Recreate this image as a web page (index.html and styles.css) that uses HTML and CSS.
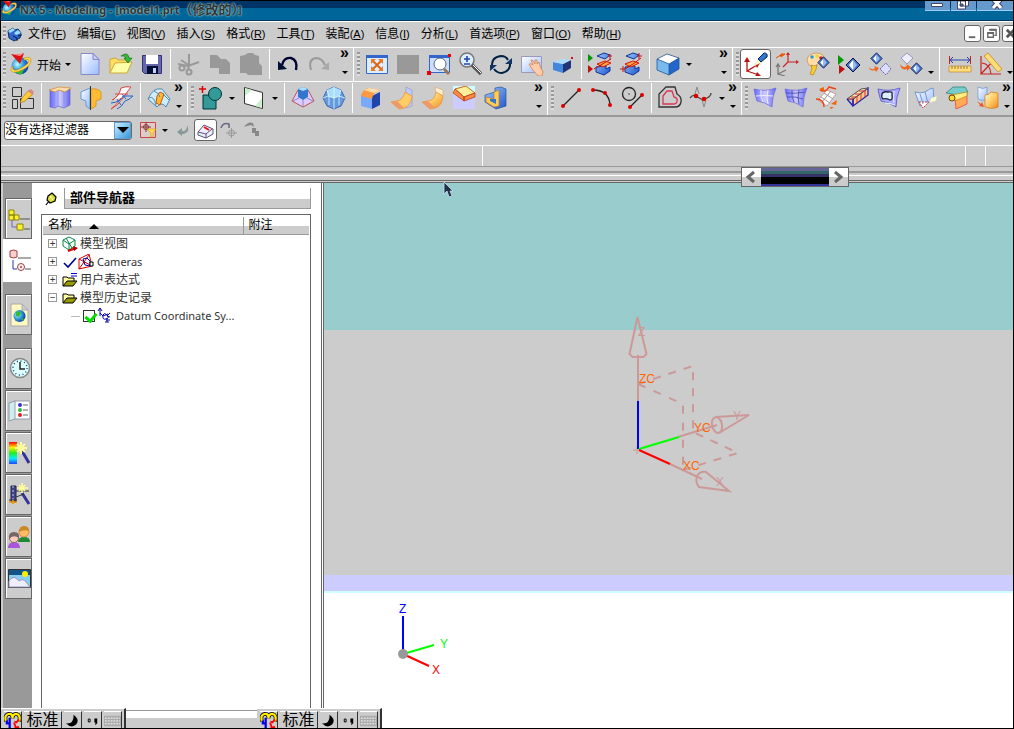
FILE: index.html
```html
<!DOCTYPE html>
<html lang="zh-CN">
<head>
    <meta charset="UTF-8">
    <meta name="viewport" content="width=device-width, initial-scale=1.0">
    <title>NX 5 - Modeling</title>
    <link rel="stylesheet" href="styles.css">
</head>
<body>

<!-- shared gradients -->
<svg class="defs" aria-hidden="true">
    <defs>
        <linearGradient id="blue" x1="0" y1="0" x2="1" y2="1"><stop offset="0" stop-color="#9cf"/><stop offset="1" stop-color="#25c"/></linearGradient>
        <linearGradient id="pale" x1="0" y1="0" x2="1" y2="1"><stop offset="0" stop-color="#fff"/><stop offset="1" stop-color="#9bf"/></linearGradient>
        <linearGradient id="violet" x1="0" y1="0" x2="1" y2="0"><stop offset="0" stop-color="#66f"/><stop offset=".5" stop-color="#ccf"/><stop offset="1" stop-color="#66e"/></linearGradient>
        <linearGradient id="gold" x1="0" y1="0" x2="1" y2="1"><stop offset="0" stop-color="#ffc"/><stop offset=".5" stop-color="#fc6"/><stop offset="1" stop-color="#e82"/></linearGradient>
        <linearGradient id="rainbow" x1="0" y1="0" x2="0" y2="1"><stop offset="0" stop-color="#f00"/><stop offset=".25" stop-color="#fe0"/><stop offset=".5" stop-color="#2e2"/><stop offset=".75" stop-color="#0ef"/><stop offset="1" stop-color="#24f"/></linearGradient>
        <radialGradient id="globe" cx=".35" cy=".4" r=".7"><stop offset="0" stop-color="#bff"/><stop offset=".5" stop-color="#39d"/><stop offset="1" stop-color="#039"/></radialGradient>
        <symbol id="nx" viewBox="0 0 24 24">
            <circle cx="11" cy="14" r="8.5" fill="url(#globe)"/>
            <path d="M5 18q5 3 10-1l-2 5q-5 1-8-4z" fill="#3b3"/>
            <path d="M2 2q7 2 13-1l-4 11z" fill="#d11"/>
            <path d="M2 2q7 2 13-1l-4 3z" fill="#f99"/>
            <path d="M15 6q7-2 7 2 0 6-9 10-8 4-11 1-1-2 2-5-1 3 1 4 3 1 9-3 7-4 6-7-1-1-5 0z" fill="#fd5" stroke="#c80" stroke-width=".6"/>
        </symbol>
        <symbol id="diamond" viewBox="0 0 16 16">
            <path d="M1 8l7-7 7 7-7 7z" fill="#47c" stroke="#114" stroke-width="1"/>
            <path d="M8 3v10L4 8z" fill="#fff"/><path d="M8 3l4 5-4 5z" fill="#9be"/>
        </symbol>
        <symbol id="folder" viewBox="0 0 16 14">
            <path d="M1 12V3h4l1 1h6v3" fill="#ff9" stroke="#000"/>
            <path d="M1 12l4-5h10l-4 5z" fill="#990" stroke="#000"/>
        </symbol>
        <symbol id="ime" viewBox="0 0 18 18">
            <path d="M2 10q-2-8 4-8 3 0 3 5 0-5 4-5 5 1 3 8" fill="none" stroke="#000" stroke-width="4"/>
            <path d="M2 10q-2-8 4-8 3 0 3 5 0-5 4-5 5 1 3 8" fill="none" stroke="#fe0" stroke-width="2.400"/>
            <path d="M6 6v11M3 9v3h4" fill="none" stroke="#00e" stroke-width="2.400"/>
            <path d="M16 8l-3 3-2-1M10 12q2 0 2 4h4" fill="none" stroke="#f00" stroke-width="1.800"/>
        </symbol>
    </defs>
</svg>

<div class="window">

    <header class="titlebar">
        <svg class="title-icon" viewBox="0 0 24 24"><use href="#nx"/></svg>
        <h1>NX 5 - Modeling - [model1.prt<span>（修改的）</span>]</h1>
        <div class="title-buttons">
            <button aria-label="Minimize"><svg viewBox="0 0 16 10"><path d="M2.500 2.500h11v3h-11z" fill="#fff" stroke="#446"/></svg></button>
            <button aria-label="Restore"><svg viewBox="0 0 16 10"><path d="M5.500-2h8v7h-8zM2.500 0h8v8h-8z" fill="#fff" stroke="#446"/><path d="M5 3h3v2H5z" fill="#369" stroke="#446"/></svg></button>
            <button aria-label="Close" class="title-close"><svg viewBox="0 0 16 10"><path d="M4-2l8 9M12-2L4 7" stroke="#446" stroke-width="5"/><path d="M4-2l8 9M12-2L4 7" stroke="#fff" stroke-width="3"/></svg></button>
        </div>
    </header>

    <nav class="menubar">
        <span class="grip"></span>
        <svg class="menu-icon" viewBox="0 0 16 16"><path d="M1 5l5-3 2 2 3-1 3 4-1 5-6 3-5-3z" fill="#36c" stroke="#136"/><path d="M1 5l5-3 2 2-5 3zM7 7l4-3 3 3-5 2z" fill="#9df"/><path d="M6 10l4 2v3M11 10l4-1" stroke="#024" fill="none"/></svg>
        <button>文件<span>(<u>F</u>)</span></button>
        <button>编辑<span>(<u>E</u>)</span></button>
        <button>视图<span>(<u>V</u>)</span></button>
        <button>插入<span>(<u>S</u>)</span></button>
        <button>格式<span>(<u>R</u>)</span></button>
        <button>工具<span>(<u>T</u>)</span></button>
        <button>装配<span>(<u>A</u>)</span></button>
        <button>信息<span>(<u>I</u>)</span></button>
        <button>分析<span>(<u>L</u>)</span></button>
        <button>首选项<span>(<u>P</u>)</span></button>
        <button>窗口<span>(<u>O</u>)</span></button>
        <button>帮助<span>(<u>H</u>)</span></button>
        <div class="doc-buttons">
            <button aria-label="Minimize part"><svg viewBox="0 0 14 14"><path d="M3 11h7" stroke="#666" stroke-width="2"/></svg></button>
            <button aria-label="Restore part"><svg viewBox="0 0 14 14"><path d="M5 3.500V3h7v6h-2M3 6h6v5H3z" fill="none" stroke="#666" stroke-width="1.500"/><path d="M5 3h7M3 6.500h6" stroke="#666" stroke-width="2"/></svg></button>
            <button aria-label="Close part"><svg viewBox="0 0 14 14"><path d="M3 3l8 8M11 3l-8 8" stroke="#555" stroke-width="3"/></svg></button>
        </div>
    </nav>

    <div class="toolbar">
        <div class="group">
            <span class="grip"></span>
            <button class="start"><svg viewBox="0 0 24 24"><use href="#nx"/></svg>开始<i class="caret"></i></button>
            <button class="tool" aria-label="New"><svg viewBox="0 0 24 24"><path d="M3 1.500h12l6 6v15H3z" fill="url(#pale)" stroke="#88c"/><path d="M15 1.500v6h6z" fill="#ccf" stroke="#88c"/></svg></button>
            <button class="tool" aria-label="Open"><svg viewBox="0 0 24 24"><path d="M1 21V7l6-1 2 2h9v4" fill="#fd6" stroke="#ca3"/><path d="M1 21l5-10 17-1-5 11z" fill="#ffa" stroke="#ca3"/><path d="M12 4q7-5 8 2h3l-4 5-4-5h2q-1-3-5-2z" fill="#3b3" stroke="#161" stroke-width=".6"/></svg></button>
            <button class="tool" aria-label="Save"><svg viewBox="0 0 24 24"><path d="M2.500 3.500h19v18h-17l-2-2z" fill="#66a" stroke="#337"/><path d="M6 3h12v9H6z" fill="#fff"/><path d="M7 14h11v8H7z" fill="#013"/><path d="M13 16h3v5h-3z" fill="#ccf"/></svg></button>
            <i class="sep"></i>
            <button class="tool" aria-label="Cut"><svg viewBox="0 0 24 24" fill="none" stroke="#999" stroke-width="2"><path d="M1 12l10 2 11-4M12 2v12l-1 3M4 8l9 6"/><circle cx="5" cy="16" r="2.500"/><circle cx="12" cy="20" r="2.500"/></svg></button>
            <button class="tool" aria-label="Copy"><svg viewBox="0 0 24 24" fill="#999"><path d="M2 3h7l4 4h5l4 4v11H11v-6H2z"/></svg></button>
            <button class="tool" aria-label="Paste"><svg viewBox="0 0 24 24" fill="#999"><path d="M1 4l5-1 3-2h5l2 2 4 1v7l3 3v9H9l-2-2H1z"/></svg></button>
            <i class="sep"></i>
            <button class="tool" aria-label="Undo"><svg viewBox="0 0 24 24"><path d="M6 13q2-8 9-7 7 2 5 12" fill="none" stroke="#003" stroke-width="2.400"/><path d="M2 9v9l9-1z" fill="#013"/></svg></button>
            <button class="tool" aria-label="Redo"><svg viewBox="0 0 24 24"><path d="M4 18Q1 7 9 6q6 0 9 7" fill="none" stroke="#999" stroke-width="2"/><path d="M22 10v8l-8-1z" fill="#aaa"/></svg></button>
            <button class="overflow overflow-mid" aria-label="More"><span>»</span><i class="caret"></i></button>
        </div>
        <div class="group">
            <span class="grip"></span>
            <button class="tool" aria-label="Fit"><svg viewBox="0 0 24 24"><path d="M1.500 3.500h21v18h-21z" fill="#def" stroke="#36c"/><path d="M1 3h22v3H1z" fill="#36c"/><path d="M8 9l8 8M16 9l-8 8" stroke="#d61" stroke-width="2"/><path d="M6 7h5l-5 5zM18 7v5l-5-5zM6 19v-5l5 5zM18 19h-5l5-5z" fill="#e72"/></svg></button>
            <button class="tool" aria-label="Fit selection"><svg viewBox="0 0 24 24"><path d="M1 3h22v19H1z" fill="#999"/><path d="M4 19h2M18 19h2" stroke="#a96"/></svg></button>
            <button class="tool" aria-label="Zoom window"><svg viewBox="0 0 24 24"><path d="M2.500 3.500h20v17h-20z" fill="#cdf" stroke="#36c"/><path d="M2 3h20v3H2z" fill="#36c"/><circle cx="13" cy="12" r="6" fill="#fff" stroke="#567"/><path d="M17 17l5 5" stroke="#975" stroke-width="3"/><path d="M0 19h4v4H0zM21 2h3v3h-3z" fill="#e00"/></svg></button>
            <button class="tool" aria-label="Zoom"><svg viewBox="0 0 24 24"><circle cx="9" cy="8" r="7" fill="#def" stroke="#777" stroke-width="1.500"/><path d="M9 4v6M6 7h6M6 12h6" stroke="#24a" stroke-width="1.600"/><path d="M14 13l9 9" stroke="#555" stroke-width="3.500"/><path d="M15 13l8 8" stroke="#fff"/></svg></button>
            <button class="tool" aria-label="Rotate"><svg viewBox="0 0 24 24" fill="none" stroke="#024" stroke-width="2"><path d="M3 15Q2 5 12 4q5 0 7 4M21 10q1 9-8 11-5 0-8-4"/><path d="M23 6v6h-7zM1 19v-6h7z" fill="#136" stroke="none"/></svg></button>
            <button class="tool" aria-label="Pan"><svg viewBox="0 0 24 24"><path d="M1.500 4.500h20v16h-20z" fill="url(#pale)" stroke="#99b"/><path d="M12 17l-3-5q2-1 4 1l-2-5q2-1 4 4l0-4 2 0v4l2-2 1 4 3 6-1 4h-4z" fill="#fca" stroke="#c74" stroke-width=".7"/></svg></button>
            <button class="tool" aria-label="Perspective"><svg viewBox="0 0 24 24"><path d="M2 10l10 2v9L2 18z" fill="#48d"/><path d="M12 12l8-4v8l-8 5z" fill="#237"/><path d="M2 10l9-3 9 1-8 4z" fill="#adf"/><path d="M20 5h2v2h-2z" fill="#c11"/></svg></button>
            <i class="sep"></i>
            <button class="tool" aria-label="Update"><svg viewBox="0 0 24 24"><path d="M9 4l7-3 6 2-5 4zM8 15v5l8 3 6-4v-4l-4 2v-3z" fill="url(#blue)" stroke="#139"/><path d="M9 12l8-3 6 2-8 4z" fill="#fa4" stroke="#d11"/><path d="M6 17L23 7M22 2v6M20 4h4" stroke="#c11" fill="none"/><path d="M0 2l5 4-5 4z" fill="#090"/><path d="M0 13l5 4-5 4z" fill="#b11"/></svg></button>
            <button class="tool" aria-label="Delay update"><svg viewBox="0 0 24 24"><path d="M7 4l7-3 6 2-5 4zM6 15v5l8 3 6-4v-4l-4 2v-3z" fill="url(#blue)" stroke="#139"/><path d="M6 12l8-3 6 2-8 4z" fill="#fa4" stroke="#d11"/><path d="M1 17h5l8-5 8-6M20 1v6M18 4h5M4 14v6" stroke="#c11" fill="none"/></svg></button>
            <i class="sep"></i>
            <button class="tool" aria-label="Shaded"><svg viewBox="0 0 24 24"><path d="M1 7l10-5 12 4-10 6z" fill="#fff"/><path d="M1 7l12 5v11L1 18z" fill="#7be"/><path d="M13 12l10-6v11l-10 6z" fill="#26c"/><path d="M1 7l10-5 12 4v11l-10 6-12-5zM1 7l12 5 10-6M13 12v11" fill="none" stroke="#259" stroke-width=".8"/></svg></button>
            <button class="drop" aria-label="Shading styles"><i class="caret"></i></button>
            <button class="overflow overflow-wide" aria-label="More"><span>»</span><i class="caret"></i></button>
        </div>
        <div class="group">
            <span class="grip"></span>
            <button class="tool active" aria-label="WCS dynamics"><svg viewBox="0 0 24 24"><path d="M3 9v10l10-6M3 19l12 4" fill="none" stroke="#b11" stroke-width="1.300"/><path d="M3 5l3 5H0zM16 11l-3 5-2-4zM17 24l-6 1 2-5z" fill="#b11"/><path d="M10 14l5-7 3 3z" fill="#ffc" stroke="#dda" stroke-width=".6"/><path d="M14 7l6-6q4 0 3 4l-6 5z" fill="#37c" stroke="#025"/></svg></button>
            <button class="tool" aria-label="WCS origin"><svg viewBox="0 0 24 24" fill="none"><path d="M13 1v9h9M13 10l-5 5" stroke="#c22" stroke-width="1.200"/><path d="M11 3l2-3 2 3zM21 8l3 2-3 2z" fill="#c22"/><path d="M3 13v9l8-4M3 22l7 2M1 15l2-3 2 3" stroke="#777" stroke-width="1.300"/><path d="M1 6l5-3 0 2 4-3-4 0" stroke="#e50" fill="#e50"/></svg></button>
            <button class="tool" aria-label="Edit display"><svg viewBox="0 0 24 24"><path d="M1 7q2-6 10-6 8 1 7 7 0 4-5 3-3 1-3 4Q1 15 1 7z" fill="#fda" stroke="#c84" stroke-width=".7"/><circle cx="6" cy="5" r="1.800" fill="#39c"/><circle cx="11" cy="4" r="1.800" fill="#dd3"/><circle cx="15" cy="6" r="1.800" fill="#c22"/><path d="M5 13q3 2 6 0l-1 4-3 6-3-1 2-5z" fill="#fc3" stroke="#a80" stroke-width=".7"/><use href="#diamond" x="11" y="4" width="13" height="13"/></svg></button>
            <button class="tool" aria-label="Show and hide"><svg viewBox="0 0 24 24"><path d="M1 3l6 5-6 5z" fill="#090"/><path d="M2 13l6 4-6 5z" fill="#b11"/><use href="#diamond" x="8" y="5" width="16" height="16"/></svg></button>
            <button class="tool" aria-label="Hide"><svg viewBox="0 0 24 24"><use href="#diamond" x="2" y="0" width="13" height="13"/><path d="M12 17l6-6 5 6-5 6z" fill="#ddf" stroke="#66a" stroke-dasharray="2 1"/><path d="M1 15q3 4 6 1l-1-2 5 2-3 4-1-2q-5 2-6-3z" fill="#e62"/></svg></button>
            <button class="tool" aria-label="Show"><svg viewBox="0 0 24 24"><path d="M2 6l6-5 6 5-6 6z" fill="#eef" stroke="#99b"/><use href="#diamond" x="11" y="10" width="13" height="13"/><path d="M1 12q3 5 7 2l-1-2 5 3-4 4v-2q-6 2-7-5z" fill="#e62"/></svg></button>
            <button class="overflow overflow-slim" aria-label="More"><i class="caret"></i></button>
        </div>
        <div class="group">
            <span class="grip"></span>
            <button class="tool" aria-label="Measure distance"><svg viewBox="0 0 24 24"><path d="M1.500 4v8M22.500 4v8" stroke="#c22"/><path d="M2 8h20M5 5L2 8l3 3M19 5l3 3-3 3" stroke="#24a" fill="none"/><path d="M1 14h22v6H1z" fill="#fd7" stroke="#b83" stroke-width=".7"/><path d="M4 14v3M7 14v3M10 14v3M13 14v3M16 14v3M19 14v3" stroke="#974"/></svg></button>
            <button class="tool" aria-label="Measure angle"><svg viewBox="0 0 24 24"><path d="M2 4v18h20M3 11q8 1 9 11M2 22L14 9" fill="none" stroke="#c22" stroke-width="1.200"/><path d="M5 4l4-3 14 16-4 3z" fill="#fd7" stroke="#c93"/></svg></button>
            <button class="overflow overflow-edge" aria-label="More"><i class="caret"></i></button>
        </div>
    </div>

    <div class="toolbar toolbar-last">
        <div class="group">
            <span class="grip"></span>
            <button class="tool" aria-label="Sketch"><svg viewBox="0 0 24 24"><path d="M1.500 1.500h9v9h-9zM1.500 13.500h5v9h-5zM9.500 12.500h13v10h-13z" fill="none" stroke="#333"/><path d="M11 12l7-8 4 4-8 7-5 2z" fill="#fc3" stroke="#a72" stroke-width=".7"/><path d="M17 5l3-2 3 3-2 3z" fill="#d88"/></svg></button>
            <i class="sep"></i>
            <button class="tool" aria-label="Extrude"><svg viewBox="0 0 24 24"><path d="M2 4v17l5 1 3-2 6 2 6-3V3l-6 3-6-3-4 3z" fill="url(#violet)" stroke="#66c" stroke-width=".7"/><path d="M10 4v16M6 6v16M16 6v16" stroke="#88d" stroke-width=".7"/><path d="M1 4l10-3 12 1-6 4-6-2-4 2z" fill="#fda" stroke="#c83" stroke-width=".7"/></svg></button>
            <button class="tool" aria-label="Revolve"><svg viewBox="0 0 24 24"><path d="M2 6l9-4v21l-4-3v-5l-5-2z" fill="url(#pale)" stroke="#69d"/><path d="M12 3q7-1 10 3v7l-5 2v5l-5 3z" fill="#fb3" stroke="#d92"/><path d="M11.500 0v24" stroke="#333"/></svg></button>
            <button class="tool" aria-label="Sweep"><svg viewBox="0 0 24 24"><path d="M2 14Q9 11 11 2q5-2 10-1-5 6-8 11-5 8-12 11 6-4 10-11" fill="#fff" stroke="#d44"/><path d="M1 17q10-1 12-7h10q-4 4-8 5-3 6-8 8M7 13l4 6M12 8l4 5" fill="none" stroke="#26c"/><path d="M5 8h13M3 14l5-5" fill="none" stroke="#d44"/></svg></button>
            <i class="sep"></i>
            <button class="tool" aria-label="Surface"><svg viewBox="0 0 24 24"><path d="M1 13Q6 1 15 3l8 10-4 8q-4-6-9 0z" fill="#cef" stroke="#58a"/><path d="M10 10l3-4 4 2-4 11-4-2z" fill="#fb3" stroke="#c50"/><path d="M2 12q5-3 7 8M7 5q5 2 6 6M16 8l6 6" stroke="#58a" fill="none"/></svg></button>
            <button class="overflow overflow-slim" aria-label="More"><span>»</span><i class="caret"></i></button>
        </div>
        <div class="group">
            <span class="grip"></span>
            <button class="tool" aria-label="Unite"><svg viewBox="0 0 24 24"><path d="M4 9h13v14H4z" fill="#399" stroke="#033"/><circle cx="16" cy="8" r="6.500" fill="#399" stroke="#033"/><path d="M0 3h7M3.500 0v7" stroke="#d00" stroke-width="1.500"/></svg></button>
            <button class="drop" aria-label="Boolean types"><i class="caret"></i></button>
            <button class="tool" aria-label="Datum plane"><svg viewBox="0 0 24 24"><path d="M2.500 1.500l18 5v16l-18-5z" fill="#fff" stroke="#333"/><path d="M13 20l7-8v10zM3 2l7 2-7 6z" fill="#cec"/></svg></button>
            <button class="drop" aria-label="Datum types"><i class="caret"></i></button>
            <i class="sep"></i>
            <button class="tool" aria-label="Draft"><svg viewBox="0 0 24 24"><path d="M1 15L7 4h10l6 11-11 6z" fill="#dcf" stroke="#b55"/><path d="M7 3l5-2 5 2v8l-5 3-5-3z" fill="#37c"/><path d="M7 3l5-2 5 2-5 2z" fill="#adf"/><path d="M2 15l6-3M12 14v6M22 15l-6-3" stroke="#88c" fill="none"/></svg></button>
            <button class="tool" aria-label="Sphere"><svg viewBox="0 0 24 24"><path d="M12 1l7 3 4 8-4 8-7 3-7-3-4-8 4-8z" fill="#69d" stroke="#46b"/><path d="M5 4l7-3 7 3-2 6-5 2-6-2z" fill="#adf"/><path d="M1 12l5-2 6 2 5-2 6 2M12 1v22M5 4l2 7 0 8M19 4l-2 7v8" fill="none" stroke="#dff" stroke-width=".8"/></svg></button>
            <i class="sep"></i>
            <button class="tool" aria-label="Edge blend"><svg viewBox="0 0 24 24"><path d="M2 8l11 2v13L2 20z" fill="#7af"/><path d="M13 10l8-4v13l-8 4z" fill="#24a"/><path d="M2 10Q3 4 9 2l12 2q-7 2-8 9z" fill="#f94"/><path d="M5 4l5-2 11 2-6 3z" fill="#fda"/></svg></button>
            <button class="tool" aria-label="Face blend"><svg viewBox="0 0 24 24"><path d="M16 1l6 3v16l-6 2z" fill="#bcf" stroke="#99c" stroke-width=".7"/><path d="M1 16l6-1q6-1 8-9l7 4q-1 10-8 12l-5 1z" fill="#fc6" stroke="#e83" stroke-width=".7"/><path d="M1 16l6-1 7 7-5 1z" fill="#e96"/></svg></button>
            <button class="tool" aria-label="Soft blend"><svg viewBox="0 0 24 24"><path d="M14 1l8 3v6l-7-3z" fill="#fec" stroke="#da7" stroke-width=".7"/><path d="M1 16l6-1q7-1 8-9l7 4q-1 10-8 12l-5 1z" fill="url(#gold)" stroke="#e83" stroke-width=".7"/><path d="M1 16l6-1 7 7-5 1z" fill="#e96"/></svg></button>
            <button class="tool" aria-label="Chamfer"><svg viewBox="0 0 24 24"><path d="M1 0h22v23H1z" fill="#cff"/><path d="M1 8l10 6v9H1zM23 10l-12 5v8h12z" fill="#ccf"/><path d="M3 3l11-3 9 7-11 4z" fill="#fe9" stroke="#c62"/><path d="M3 3l9 8v4L1 7zM12 11l11-4v4l-11 4z" fill="#f84" stroke="#a31" stroke-width=".7"/></svg></button>
            <button class="tool" aria-label="Shell"><svg viewBox="0 0 24 24"><path d="M2 9l10-3V2l6-1 5 2v17l-10 3-11-7z" fill="url(#blue)" stroke="#259" stroke-width=".7"/><path d="M3 11l8 2V6l5-2v16l-5 1-8-5z" fill="#fc5" stroke="#b73" stroke-width=".7"/><path d="M7 13h6v5l-6-3z" fill="#37c"/></svg></button>
            <button class="overflow overflow-wide" aria-label="More"><span>»</span><i class="caret"></i></button>
        </div>
        <div class="group">
            <span class="grip"></span>
            <button class="tool" aria-label="Line"><svg viewBox="0 0 24 24"><path d="M4 20L20 4" stroke="#222" stroke-width="1.300"/><circle cx="4" cy="20" r="2" fill="#d00"/><circle cx="20" cy="4" r="2" fill="#d00"/></svg></button>
            <button class="tool" aria-label="Arc"><svg viewBox="0 0 24 24"><path d="M3 4q16 0 17 15" fill="none" stroke="#222" stroke-width="1.300"/><circle cx="3" cy="4" r="2" fill="#d00"/><circle cx="15" cy="7" r="2" fill="#d00"/><circle cx="20" cy="19" r="2" fill="#d00"/></svg></button>
            <button class="tool" aria-label="Circle"><svg viewBox="0 0 24 24"><circle cx="8" cy="8" r="6.500" fill="none" stroke="#222" stroke-width="1.300"/><path d="M8 7v2" stroke="#555"/><path d="M9 21L21 9" stroke="#222" stroke-width="1.300"/><circle cx="9" cy="21" r="2" fill="#d00"/><circle cx="21" cy="9" r="2" fill="#d00"/></svg></button>
            <i class="sep"></i>
            <button class="tool" aria-label="Offset curve"><svg viewBox="0 0 24 24" fill="none"><path d="M1 21V8l7-7h9l2 7q5 3 4 8-1 5-6 5z" stroke="#333" stroke-width="1.300"/><path d="M5 17v-7l4-5h5l2 6q4 1 3 4 0 3-4 3H5z" stroke="#d35" stroke-width="1.300"/></svg></button>
            <button class="tool" aria-label="Spline"><svg viewBox="0 0 24 24"><path d="M1 12q3-4 6-2t5 3 6-1 4-5" fill="none" stroke="#444" stroke-width="1.300"/><path d="M8 1L6 8M8 1l2 7M13 14l2 7 2-7" fill="none" stroke="#888"/><circle cx="7" cy="10" r="2.300" fill="#d00"/><circle cx="15" cy="13" r="2.300" fill="#d00"/></svg></button>
            <button class="drop" aria-label="Spline types"><i class="caret"></i></button>
            <button class="overflow overflow-slim" aria-label="More"><span>»</span><i class="caret"></i></button>
        </div>
        <div class="group">
            <span class="grip"></span>
            <button class="tool" aria-label="Ruled"><svg viewBox="0 0 24 24"><path d="M1 3q11 3 22-1-4 9-4 19-7-5-15-6Q2 9 1 3z" fill="url(#violet)" stroke="#66d" stroke-width=".7"/><path d="M8 4q-1 7 2 12M15 4q-2 8 0 14M3 10q9-1 17 0" stroke="#eef" fill="none"/></svg></button>
            <button class="tool" aria-label="Through curves"><svg viewBox="0 0 24 24"><path d="M1 3q11 3 22-1-4 9-4 19-7-5-15-6Q2 9 1 3z" fill="url(#violet)" stroke="#66d" stroke-width=".7"/><path d="M8 4q-1 7 2 12M15 4q-2 8 0 14M2 7q9 1 19-1M3 11q8-1 16 2" stroke="#44a" stroke-width=".8" fill="none"/></svg></button>
            <button class="tool" aria-label="Curve mesh"><svg viewBox="0 0 24 24"><path d="M3 14L12 4l9 4-9 12z" fill="#fff" stroke="#c99"/><path d="M6 11l9 6M9 7l9 6M7 16l9-11" stroke="#999"/><path d="M5 4q6 3 9-3l7 2M1 13q8 0 8 8" fill="none" stroke="#e41" stroke-width="1.500"/><path d="M4 3l5-2v4zM16 18l6-4-1 5zM15 21h4l-3 2z" fill="#e60"/></svg></button>
            <button class="tool" aria-label="Swept"><svg viewBox="0 0 24 24"><path d="M7 13L22 2v7L7 20z" fill="#fc8" stroke="#22b" stroke-width="1.300"/><path d="M1 13L15 3l7-1L7 13z" fill="#fda" stroke="#555"/><path d="M1 13h6v7M11 10v7M15 7v7M19 4v7M5 11h5M9 8h5M13 5h5" fill="none" stroke="#c33"/><path d="M1 13l6 7M7 13v7" stroke="#22b" stroke-width="1.300"/></svg></button>
            <button class="tool" aria-label="Section"><svg viewBox="0 0 24 24"><path d="M1 3q11 3 22-1-4 9-4 19-7-5-15-6Q2 9 1 3z" fill="#aaf" stroke="#66c"/><path d="M5 8q1-3 6-2 5-1 4 3 1 5-2 5-4-2-7-1-2-2-1-5z" fill="#def" stroke="#224" stroke-width="1.300"/><path d="M8 17q5 0 10 2M17 5q-1 6 0 12" stroke="#eef" fill="none"/></svg></button>
            <i class="sep"></i>
            <button class="tool" aria-label="Bridge"><svg viewBox="0 0 24 24"><path d="M1 6q5 2 10 0 6-4 8-4l1 11-6 4-8 3z" fill="url(#pale)" stroke="#58c" stroke-width=".8"/><path d="M5 16l10 0-6 6z" fill="#fff" stroke="#d33" stroke-dasharray="2 1"/><path d="M17 12l6-2-1 5-7 2z" fill="#ffc" stroke="#ccc" stroke-width=".6"/><path d="M11 6l3 11M6 8l3 10" stroke="#58c" stroke-width=".8"/></svg></button>
            <button class="tool" aria-label="Offset surface"><svg viewBox="0 0 24 24"><path d="M1 7l7-6h12l3 5-10 3z" fill="#7cc" stroke="#277" stroke-width=".7"/><path d="M10 11l12-4v11l-11 5z" fill="#fa5" stroke="#e33" stroke-width=".7"/><path d="M5 9l7-1 10-2v4l-10 4H5z" fill="#fe8" stroke="#b80" stroke-width=".7"/><circle cx="7" cy="12" r="3" fill="#fd3" stroke="#740"/></svg></button>
            <button class="tool" aria-label="Trim sheet"><svg viewBox="0 0 24 24"><path d="M2 1q5 3 9 0v12q-5 3-9 0z" fill="url(#pale)" stroke="#69c" stroke-width=".7"/><path d="M9 9q5 0 6-3l7 1v14q-6 3-13 0z" fill="url(#gold)" stroke="#c72" stroke-width=".7"/><path d="M1 15l4 3 1-2 2 5-5-1 1-1z" fill="#e52"/></svg></button>
            <button class="overflow overflow-edge" aria-label="More"><span>»</span><i class="caret"></i></button>
        </div>
    </div>

    <div class="selection-bar">
        <div class="filter">
            <select aria-label="选择过滤器"><option>没有选择过滤器</option></select>
            <span class="filter-arrow"></span>
        </div>
        <button class="small-tool" aria-label="Selection scope"><svg viewBox="0 0 18 18"><path d="M1.500 1.500h15v15h-15z" fill="#dcc" stroke="#c44"/><path d="M2 6h10M7 1v10" stroke="#833"/><circle cx="7" cy="6" r="2.500" fill="none" stroke="#833"/><path d="M8 8h9l-3 4v4h-2v-4z" fill="#fd5" stroke="#c90" stroke-width=".6"/></svg></button>
        <button class="drop" aria-label="Scope options"><i class="caret"></i></button>
        <button class="small-tool" aria-label="Back"><svg viewBox="0 0 18 18"><path d="M3 11l5-4v3q5 1 5-6 4 8-5 9v2z" fill="#899" /></svg></button>
        <button class="small-tool active" aria-label="Solid body"><svg viewBox="0 0 18 18"><path d="M1 11l6-7 9 4v5l-7 4-8-3z" fill="#eef" stroke="#557"/><path d="M1 11l8 2v4M9 13l6-5" fill="none" stroke="#557"/><path d="M7 6l5 3" stroke="#e11" stroke-width="2"/></svg></button>
        <button class="small-tool" aria-label="Point"><svg viewBox="0 0 18 18" fill="none" stroke="#999"><path d="M1 7q2-6 8-4v4" stroke="#668" stroke-width="1.500"/><path d="M6 12h11M11.500 7v10"/><circle cx="11.500" cy="12" r="3"/></svg></button>
        <button class="small-tool" aria-label="Layer"><svg viewBox="0 0 18 18" fill="#888"><path d="M1 6q4-6 9-4l1 4-3-2-4 1zM9 7h4v3h3v5h-4v-3H9z"/></svg></button>
    </div>

    <div class="cue-line">
        <div class="cue"></div>
        <div class="status"></div>
        <div class="status-cell"></div>
        <div class="status-end"></div>
    </div>

    <div class="dock-strip">
        <div class="scroller">
            <button aria-label="Scroll left"><svg viewBox="0 0 16 16"><path d="M11 3L5 8l6 5" fill="none" stroke="#666" stroke-width="3"/></svg></button>
            <span class="scroller-track"></span>
            <button aria-label="Scroll right"><svg viewBox="0 0 16 16"><path d="M5 3l6 5-6 5" fill="none" stroke="#666" stroke-width="3"/></svg></button>
        </div>
    </div>

    <main class="work">
        <aside class="resource-bar">
            <button class="tab" aria-label="Assembly Navigator"><svg viewBox="0 0 24 26"><path d="M2 4h5v5H2zM2 9h5v5H2zM7 9h5v5H7zM10 18h6v6h-6z" fill="#fe3" stroke="#880"/><path d="M13 13h10M17 23h6" stroke="#555"/><path d="M5 14v7h5" stroke="#66b" fill="none"/></svg></button>
            <button class="tab tab-on" aria-label="部件导航器"><svg viewBox="0 0 24 26"><path d="M2 3q4-2 7 0v6q-3 2-7 0z" fill="#fcc" stroke="#944"/><path d="M10 10h13M17 21h6" stroke="#555"/><path d="M5 12v9h4" stroke="#33a" fill="none"/><circle cx="13" cy="19" r="3.500" fill="#fee" stroke="#944"/><circle cx="13" cy="19" r="1" fill="#944"/></svg></button>
            <button class="tab tab-wide" aria-label="Internet Explorer"><svg viewBox="0 0 24 26"><path d="M4 2h11l6 6v16H4z" fill="#fff8c0" stroke="#aaa"/><path d="M15 2v6h6z" fill="#ccd" stroke="#aaa"/><circle cx="12.500" cy="14" r="6" fill="url(#globe)"/><path d="M9 10q4-2 5 1l-2 4-3-1zM14 16l3 1-2 2z" fill="#3b3"/></svg></button>
            <button class="tab tab-wide" aria-label="History"><svg viewBox="0 0 24 26"><circle cx="13" cy="12" r="9.500" fill="#dff" stroke="#888" stroke-width="1.500"/><circle cx="13" cy="12" r="7" fill="none" stroke="#247" stroke-width="1.500" stroke-dasharray="1 2.700"/><path d="M13 6v7h5" fill="none" stroke="#222" stroke-width="1.500"/></svg></button>
            <button class="tab" aria-label="Palettes"><svg viewBox="0 0 24 26"><path d="M7 3h16v18H7z" fill="#fff" stroke="#99a"/><path d="M2 5l6-2v18l-6 2z" fill="#cee" stroke="#99a"/><circle cx="13" cy="7" r="2" fill="#33c"/><circle cx="13" cy="12" r="2" fill="#3b3"/><circle cx="13" cy="17" r="2" fill="#d22"/><path d="M16 7h5M16 12h5M16 17h5" stroke="#666"/></svg></button>
            <button class="tab" aria-label="Visualization"><svg viewBox="0 0 24 26"><path d="M2 2h8v22H2z" fill="url(#rainbow)"/><path d="M15 11l7 12" stroke="#339" stroke-width="3"/><path d="M14 2v12M8 8h12M10 4l8 8M18 4l-8 8" stroke="#ff9" stroke-width="2"/></svg></button>
            <button class="tab" aria-label="Animation"><svg viewBox="0 0 24 26"><path d="M4 4h5v16H4z" fill="#448" stroke="#224"/><path d="M6 4v16" stroke="#acf" stroke-dasharray="2 2"/><path d="M15 11l7 11" stroke="#339" stroke-width="3"/><path d="M9 9h13M9 15l8-3M2 18h8" stroke="#333"/><path d="M15 1v10M10 6h11M12 3l6 6M18 3l-6 6" stroke="#ff9" stroke-width="1.500"/><path d="M2 20h8M6 18v4" stroke="#e91" stroke-width="1.500"/></svg></button>
            <button class="tab" aria-label="Roles"><svg viewBox="0 0 24 26"><path d="M11 18q0-5 6-5t6 5z" fill="#283"/><circle cx="17" cy="8" r="5" fill="#fb6" stroke="#c72" stroke-width=".7"/><path d="M12 8q0-6 5-6t5 5q-5-2-10 1z" fill="#c82"/><path d="M1 24q0-6 6-6t6 6z" fill="#a5d"/><circle cx="7" cy="14" r="4.500" fill="#fcb" stroke="#866"/><path d="M2 15q-1-7 5-7t5 6q-6-4-10 1z" fill="#766"/></svg></button>
            <button class="tab" aria-label="System Scenes"><svg viewBox="0 0 24 26"><path d="M1.500 3.500h22v18h-22z" fill="#8ce" stroke="#333"/><path d="M2 4h21v5H2z" fill="#158"/><path d="M2 21v-6q4-6 8-2l2 2q4-3 7 1l4 5z" fill="#eef" stroke="#99b"/><circle cx="18" cy="8" r="3" fill="#fe0"/></svg></button>
        </aside>

        <section class="navigator">
            <div class="nav-head">
                <svg class="pin" viewBox="0 0 12 14"><path d="M1 13l3-4M3 4l4-3 4 4-1 4-5 2-3-3z" fill="#dd3" stroke="#000" stroke-width="1.200"/><path d="M5 4l3 4" stroke="#fff"/></svg>
                <h2>部件导航器</h2>
            </div>
            <div class="tree-box">
                <table class="tree">
                    <thead>
                        <tr>
                            <th class="col-name">名称<svg class="sort" viewBox="0 0 10 5"><path d="M0 5l5-5 5 5z"/></svg></th>
                            <th>附注</th>
                        </tr>
                    </thead>
                    <tbody>
                        <tr><td colspan="2"><div class="node">
                            <button class="toggle" aria-label="Expand">+</button>
                            <svg viewBox="0 0 16 16"><path d="M1 4l6-3 6 3v6l-6 4-6-4zM1 4l6 4 6-4M7 8v6M4 2l6 10" fill="none" stroke="#084"/><path d="M6 15l8-3" stroke="#d00" stroke-width="2"/><path d="M11 10l5 2-4 3z" fill="#a00"/></svg>
                            <span>模型视图</span>
                        </div></td></tr>
                        <tr><td colspan="2"><div class="node">
                            <button class="toggle" aria-label="Expand">+</button>
                            <svg viewBox="0 0 16 16"><path d="M2 9l4 4 8-9" fill="none" stroke="#009" stroke-width="1.600"/></svg>
                            <svg viewBox="0 0 16 16"><path d="M1 5l10-5 3 12-13 3zM1 5l13 7M11 1L1 15" fill="none" stroke="#d00"/><path d="M5 5l4-1 3 3v5l-5-1z" fill="none" stroke="#00a"/><path d="M12 8h3v4h-3z" fill="#fff" stroke="#000"/></svg>
                            <span class="latin">Cameras</span>
                        </div></td></tr>
                        <tr><td colspan="2"><div class="node">
                            <button class="toggle" aria-label="Expand">+</button>
                            <svg viewBox="0 0 16 16"><use href="#folder" y="2" width="16" height="14"/><path d="M9 1.500h6M9 4h6" stroke="#00d"/></svg>
                            <span>用户表达式</span>
                        </div></td></tr>
                        <tr><td colspan="2"><div class="node">
                            <button class="toggle" aria-label="Collapse">−</button>
                            <svg viewBox="0 0 16 16"><use href="#folder" y="1" width="16" height="14"/></svg>
                            <span>模型历史记录</span>
                        </div></td></tr>
                        <tr><td colspan="2"><label class="node node-child">
                            <input type="checkbox" checked>
                            <svg viewBox="0 0 16 16"><path d="M3 0v8M1 3l2-3 2 3M3 5l3 3 5-2M6 7q-1 5 3 4t1-4-4 0M13 5l-3 3 3 1M9 12l4 0M10 10v4M12 14l-4 0" fill="none" stroke="#00a"/></svg>
                            <span class="latin">Datum Coordinate Sy...</span>
                        </label></td></tr>
                    </tbody>
                </table>
            </div>
        </section>

        <section class="viewport">
            <svg class="scene" width="689" height="545" viewBox="324 183 689 545" fill="none">
                <!-- datum coordinate system -->
                <g stroke="#c99" stroke-width="2">
                    <path d="M637.500 317l-8 37 3 3h11l3-3zM638 355v46"/>
                    <path d="M638 384l55-18v66" stroke-dasharray="8 8"/>
                    <path d="M638 384l45 20v66" stroke-dasharray="8 9"/>
                    <path d="M683 470l55-17-45-21" stroke-dasharray="8 8"/>
                    <path d="M678 437l39-12"/>
                    <ellipse cx="717" cy="425" rx="5" ry="8" transform="rotate(-12 717 425)"/>
                    <path d="M716 417l33-2-30 18"/>
                    <path d="M670 464l32 15M706 472l23 19-30-4q-4-5-2-11 3-5 9-4z"/>
                    <path d="M633 450h8M637 446v8" stroke-width="1"/>
                </g>
                <g class="axis-name">
                    <text x="638" y="336">Z</text>
                    <text x="733" y="420">Y</text>
                    <text x="716" y="486">X</text>
                </g>
                <!-- work coordinate system -->
                <g stroke-width="2">
                    <path d="M638 401v48" stroke="#00f"/>
                    <path d="M639 449l40-12" stroke="#0f0"/>
                    <path d="M639 450l31 14" stroke="#f00"/>
                </g>
                <g class="wcs-name">
                    <text x="639" y="383">ZC</text>
                    <text x="694" y="432">YC</text>
                    <text x="683" y="470">XC</text>
                </g>
                <!-- view triad -->
                <g stroke-width="2">
                    <path d="M403 616v38" stroke="#00f"/>
                    <path d="M403 654l31-9" stroke="#0f0"/>
                    <path d="M403 654l26 12" stroke="#f00"/>
                </g>
                <circle cx="403" cy="654" r="5" fill="#999"/>
                <text x="399" y="613" fill="#00f">Z</text>
                <text x="440" y="648" fill="#0f0">Y</text>
                <text x="432" y="674" fill="#f00">X</text>
            </svg>
        </section>
    </main>

    <footer class="ime-row">
        <div class="ime-bar">
            <button aria-label="输入法"><svg viewBox="0 0 18 18"><use href="#ime"/></svg></button>
            <button class="ime-mode">标准</button>
            <button aria-label="半角"><svg viewBox="0 0 18 18"><path d="M10 3q7 5 3 10-5 5-11-1 9 1 8-9z"/></svg></button>
            <button aria-label="标点"><svg viewBox="0 0 18 18"><path d="M4.500 7.500h2v3h-2z" fill="none" stroke="#000"/><path d="M11 7h3v5l-2 2v-3h-1z"/></svg></button>
            <button aria-label="软键盘"><svg viewBox="0 0 18 18"><path d="M0 4h18v11H0z" fill="#aaa"/><path d="M1 6.500h16M1 9.500h16M1 12.500h16" stroke="#fff" stroke-dasharray="2 1"/></svg></button>
        </div>
        <div class="ime-gap"></div>
        <div class="ime-bar">
            <button aria-label="输入法"><svg viewBox="0 0 18 18"><use href="#ime"/></svg></button>
            <button class="ime-mode">标准</button>
            <button aria-label="半角"><svg viewBox="0 0 18 18"><path d="M10 3q7 5 3 10-5 5-11-1 9 1 8-9z"/></svg></button>
            <button aria-label="标点"><svg viewBox="0 0 18 18"><path d="M4.500 7.500h2v3h-2z" fill="none" stroke="#000"/><path d="M11 7h3v5l-2 2v-3h-1z"/></svg></button>
            <button aria-label="软键盘"><svg viewBox="0 0 18 18"><path d="M0 4h18v11H0z" fill="#aaa"/><path d="M1 6.500h16M1 9.500h16M1 12.500h16" stroke="#fff" stroke-dasharray="2 1"/></svg></button>
        </div>
    </footer>

    <svg class="pointer" viewBox="0 0 11 17"><path d="M1 1v12l3-3 2 6 3-1-2-5h3z" fill="#234" stroke="#cdf" stroke-width=".8"/></svg>
</div>

</body>
</html>
```
FILE: styles.css
```css
* {
    box-sizing: border-box;
}

body {
    margin: 0;
    font-family: "Liberation Sans", "Noto Sans CJK SC", sans-serif;
    font-size: 12px;
    color: #000;
}

button {
    margin: 0;
    padding: 0;
    border: 0;
    background: none;
    font: inherit;
    color: inherit;
}

svg {
    display: block;
    flex: none;
}

h1, h2 {
    margin: 0;
}

.defs {
    position: absolute;
    width: 0;
    height: 0;
}

.window {
    position: relative;
    display: flex;
    flex-direction: column;
    height: 100vh;
    border: 1px solid #000;
    background: #ccc;
    overflow: hidden;
}

/* title bar */
.titlebar {
    display: flex;
    height: 21px;
    flex: none;
    background: linear-gradient(#036 7px, #069 7px);
    border-bottom: 1px solid #fff;
    box-shadow: inset 0 -1px #036;
}

.title-icon {
    width: 17px;
    height: 17px;
    margin-top: -2px;
}

h1 {
    margin-left: 2px;
    font-family: "Noto Sans", "Noto Sans CJK SC", sans-serif;
    font-size: 11px;
    line-height: 16px;
    font-weight: bold;
    color: #333;
    text-shadow: 0 0 2px #9cc, 0 0 2px #9cc;
    white-space: nowrap;
}

h1 span {
    font-size: 13px;
}

.title-buttons {
    display: flex;
    gap: 1px;
    height: 10px;
    margin-left: auto;
}

.title-buttons button {
    width: 25px;
    padding-left: 4px;
    background: #69c;
    border-bottom: 1px solid #9cf;
}

.title-buttons .title-close {
    width: 36px;
    padding-left: 12px;
}

.title-buttons svg {
    width: 16px;
    height: 10px;
}

/* menus */
.menubar {
    display: flex;
    align-items: center;
    gap: 11px;
    height: 26px;
    flex: none;
    padding: 0 0 2px 2px;
    border-bottom: 1px solid #fff;
}

.menubar .grip {
    height: 16px;
    margin-right: -10px;
}

.menu-icon {
    width: 16px;
    height: 16px;
    margin-right: -6px;
}

.menubar button {
    line-height: 20px;
    white-space: nowrap;
}

.menubar button span {
    font-size: 11px;
}

.doc-buttons {
    display: flex;
    gap: 2px;
    margin-left: auto;
    margin-right: -6px;
}

.doc-buttons button {
    width: 17px;
    height: 17px;
    padding: 1px;
    border: 1px solid #666;
    border-radius: 3px;
    background: #fff;
}

/* toolbars */
.toolbar {
    display: flex;
    height: 34px;
    flex: none;
    border-bottom: 1px solid #fff;
}

.toolbar-last {
    height: 35px;
    border-bottom: 2px solid #999;
}

.group {
    display: flex;
    flex: none;
    align-items: center;
    padding: 0 0 1px 3px;
    border-left: 1px solid #fff;
}

.group:first-child {
    padding-left: 2px;
    border-left: 0;
}

.group:last-child {
    flex: 1;
    min-width: 0;
    overflow: hidden;
}

.grip {
    width: 3px;
    height: 24px;
    margin-right: 1px;
    background: repeating-linear-gradient(#999 0 2px, #ddd 2px 4px);
}

.tool {
    display: flex;
    flex: none;
    justify-content: center;
    align-items: center;
    width: 31px;
    height: 30px;
}

.tool svg,
.start svg {
    width: 24px;
    height: 24px;
}

.active {
    border: 1px solid #666;
    border-radius: 3px;
    background: #fff;
}

.start {
    display: flex;
    align-items: center;
    width: 67px;
    padding-left: 2px;
}

.start svg {
    margin-right: 4px;
}

.caret {
    display: inline-block;
    border: 3px solid transparent;
    border-top-color: #000;
    border-bottom: 0;
}

.start .caret {
    margin-left: 4px;
}

.drop {
    width: 12px;
    height: 30px;
    flex: none;
}

.drop .caret {
    vertical-align: middle;
}

.sep {
    flex: none;
    width: 6px;
    height: 30px;
    background: linear-gradient(#fff, #fff) 3px 0 / 1px 100% no-repeat;
}

.overflow {
    display: flex;
    flex: none;
    flex-direction: column;
    justify-content: space-between;
    align-items: flex-end;
    height: 30px;
    padding: 0 5px 5px 0;
}

.overflow span {
    margin-right: -1px;
    font-size: 16px;
    font-weight: bold;
    line-height: 8px;
}

.overflow .caret {
    margin-top: auto;
}

.overflow-slim {
    width: 13px;
}

.overflow-mid {
    width: 19px;
}

.overflow-wide {
    width: 37px;
}

.overflow-edge {
    width: 7px;
    padding-right: 0;
}

/* selection bar */
.selection-bar {
    display: flex;
    align-items: center;
    height: 29px;
    flex: none;
    padding: 0 0 2px 3px;
    border-bottom: 1px solid #fff;
}

.filter {
    position: relative;
    margin-right: 4px;
}

.filter select {
    display: block;
    width: 128px;
    height: 19px;
    padding: 0;
    border: 1px solid #666;
    border-radius: 3px;
    appearance: none;
    background: #fff;
    font: inherit;
    color: #000;
}

.filter-arrow {
    position: absolute;
    top: 1px;
    right: 1px;
    width: 17px;
    height: 17px;
    border: 1px solid #69c;
    background: linear-gradient(135deg, #cef, #39d);
    pointer-events: none;
}

.filter-arrow::after {
    content: "";
    position: absolute;
    left: 2px;
    top: 4px;
    border: 6px solid transparent;
    border-top-color: #000;
    border-bottom: 0;
}

.small-tool {
    display: flex;
    flex: none;
    justify-content: center;
    align-items: center;
    width: 23px;
    height: 22px;
}

.small-tool svg {
    width: 18px;
    height: 18px;
}

/* cue and status */
.cue-line {
    display: flex;
    height: 21px;
    flex: none;
    border-bottom: 1px solid #999;
}

.cue {
    width: 482px;
    border-right: 1px solid #fff;
}

.status {
    flex: 1;
    border-right: 1px solid #fff;
}

.status-cell {
    width: 20px;
    border-right: 1px solid #fff;
}

.status-end {
    width: 27px;
}

.dock-strip {
    position: relative;
    height: 16px;
    flex: none;
    background: linear-gradient(#ccc 4px, #999 4px 6px, #ccc 6px 8px, #fff 8px 9px, #ccc 9px 13px, #666 13px 14px, #ccc 14px 15px, #666 15px);
}

.scroller {
    position: absolute;
    top: 0;
    right: 164px;
    z-index: 1;
    display: flex;
    width: 108px;
    height: 20px;
    border: 1px solid #666;
}

.scroller button {
    width: 19px;
    padding-left: 1px;
    background: linear-gradient(#fff 9px, #ccc 9px);
}

.scroller svg {
    width: 16px;
    height: 16px;
}

.scroller-track {
    flex: 1;
    background: linear-gradient(#669 3px, #366 3px 6px, #336 6px 9px, #000 9px 16px, #339 16px);
}

/* work area */
.work {
    display: flex;
    flex: 1;
    min-height: 0;
}

.resource-bar {
    display: flex;
    flex-direction: column;
    align-items: flex-end;
    width: 31px;
    flex: none;
    padding-top: 15px;
    border-left: 2px solid #ccc;
    background: #999;
}

.tab {
    display: flex;
    justify-content: flex-end;
    align-items: center;
    width: 27px;
    height: 41px;
    flex: none;
    margin-bottom: 1px;
    border: 1px solid #666;
    background: #ccc;
    box-shadow: inset 1px 1px #fff;
}

.tab svg {
    width: 24px;
    height: 26px;
}

.tab-on {
    width: 29px;
    height: 43px;
    margin-top: -1px;
    border: 0;
    background: #fff;
}

.tab-wide {
    margin-top: 12px;
}

.tab-on + .tab-wide {
    margin-top: 11px;
}

.navigator {
    display: flex;
    flex-direction: column;
    width: 292px;
    flex: none;
    padding: 5px 10px 0 9px;
    border-right: 3px double #666;
    background: #fff;
}

.nav-head {
    display: flex;
    align-items: center;
    margin-bottom: 5px;
}

.pin {
    width: 12px;
    height: 14px;
    margin: 0 7px 0 4px;
}

.nav-head h2 {
    flex: 1;
    padding-left: 5px;
    border: solid #999;
    border-width: 0 1px 1px 1px;
    background: linear-gradient(#fff 11px, #ccc 11px);
    font-size: 13px;
    line-height: 20px;
}

.tree-box {
    flex: 1;
    padding: 2px 1px;
    border: 1px solid #666;
}

.tree {
    width: 100%;
    border-collapse: collapse;
    table-layout: fixed;
    font-family: "Noto Sans", "Noto Sans CJK SC", sans-serif;
    color: #333;
}

.tree th {
    height: 17px;
    padding: 0 0 0 5px;
    border-bottom: 1px solid #999;
    background: linear-gradient(#fff 9px, #ccc 9px);
    font-weight: normal;
    line-height: 16px;
    text-align: left;
    color: #000;
}

.tree .col-name {
    width: 200px;
    border-right: 1px solid #999;
}

.sort {
    display: inline-block;
    width: 10px;
    height: 5px;
    margin-left: 17px;
    vertical-align: middle;
}

.tree td {
    padding: 0;
}

.node {
    display: flex;
    align-items: center;
    height: 18px;
    padding-left: 5px;
}

.node svg {
    width: 16px;
    height: 16px;
}

.node span {
    margin-left: 2px;
    line-height: 18px;
}

.node .latin {
    margin-left: 3px;
    font-size: 11px;
}

.toggle {
    width: 9px;
    height: 9px;
    margin-right: 5px;
    border: 1px solid #999;
    font-size: 10px;
    line-height: 7px;
}

.node-child {
    padding-left: 40px;
    background: linear-gradient(#bbb, #bbb) 28px 9px / 9px 1px no-repeat;
}

.node-child svg {
    margin-left: 1px;
}

.node-child input {
    appearance: none;
    width: 12px;
    height: 12px;
    margin: 0 1px 0 0;
    border: 1px solid #333;
    background: #fff;
}

.node-child input:checked::after {
    content: "";
    display: block;
    width: 5px;
    height: 8px;
    margin-left: 3px;
    border: solid #0d0;
    border-width: 0 3px 3px 0;
    transform: rotate(40deg);
}

.viewport {
    flex: 1;
    min-width: 0;
    overflow: hidden;
    background: linear-gradient(#9cc 147px, #ccc 147px 392px, #ccf 392px 408px, #cff 408px 410px, #fff 410px);
}

.scene {
    font-family: "Liberation Sans", sans-serif;
    font-size: 12px;
}

.axis-name {
    fill: #c99;
}

.wcs-name {
    fill: #f60;
}

/* input method bars along the bottom edge */
.ime-row {
    position: absolute;
    left: 0;
    bottom: 0;
    display: flex;
    height: 20px;
}

.ime-bar {
    display: flex;
    gap: 2px;
    padding: 2px 2px 0 3px;
    border-top: 1px solid #fff;
    border-right: 2px solid #333;
    background: #ccc;
}

.ime-bar button {
    width: 18px;
    height: 17px;
    border-top: 1px solid #fff;
    border-right: 1px solid #333;
}

.ime-bar svg {
    width: 17px;
    height: 17px;
}

.ime-bar .ime-mode {
    width: 38px;
    font-size: 16px;
    line-height: 16px;
}

.ime-gap {
    width: 131px;
    margin-top: 2px;
    border-top: 1px solid #999;
    background: linear-gradient(#fff 7px, #ccc 7px);
}

.pointer {
    position: absolute;
    left: 442px;
    top: 180px;
    width: 11px;
    height: 17px;
}
```
